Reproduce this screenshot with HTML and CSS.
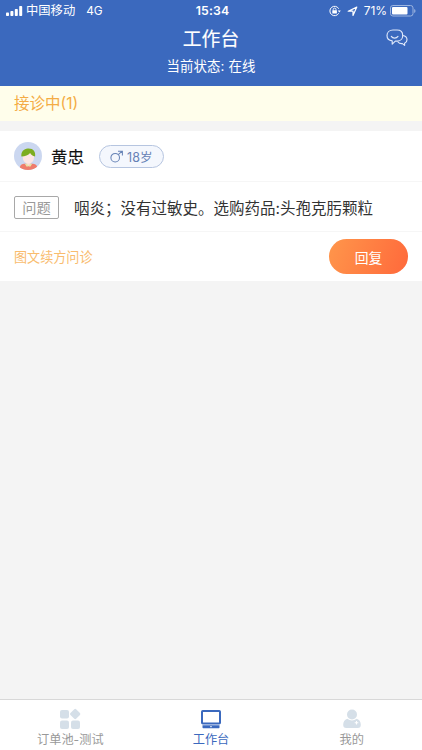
FILE: index.html
```html
<!DOCTYPE html>
<html lang="zh-CN">
<head>
<meta charset="utf-8">
<meta name="viewport" content="width=device-width">
<title>工作台</title>
<link rel="stylesheet" href="styles.css">
</head>
<body>
<div class="app">
  <header class="header">
    <div class="status">
      <div class="status-left">
        <svg class="signal" width="17" height="11" viewBox="0 0 17 11" fill="#fff"><rect x="0" y="6.500" width="3" height="3.500" rx=".8"/><rect x="4.400" y="5" width="3" height="5" rx=".8"/><rect x="8.800" y="3" width="3" height="7" rx=".8"/><rect x="13.200" y="0" width="3" height="10" rx=".8"/></svg>
        <span class="carrier">中国移动</span><span class="network">4G</span>
      </div>
      <span class="clock">15:34</span>
      <div class="status-right">
        <svg width="12" height="12" viewBox="0 0 12 12" fill="none" stroke="#fff"><path d="M9.700 8.300A4.700 4.700 0 1 1 9.700 3.700"/><path d="M8.800 5.500h3l-1.500 2z" fill="#fff" stroke="none"/><path d="M4.200 5.600V4.500a1.400 1.400 0 0 1 2.800 0v1.100" stroke-width=".9"/><rect x="3.300" y="5.200" width="4.600" height="3.300" rx=".5" fill="#fff" stroke="none"/></svg>
        <svg class="location" width="11" height="11" viewBox="0 0 11 11" fill="none" stroke="#fff" stroke-width="1.200" stroke-linejoin="round"><path d="M9.800 1.100 6 9.500V5.200H1.200z"/></svg>
        <span class="percent">71%</span>
        <svg width="26" height="12" viewBox="0 0 26 12"><rect x=".5" y=".5" width="22.500" height="10.500" rx="2.400" fill="none" stroke="#9db5e0"/><rect x="2" y="2" width="15.500" height="7.500" rx="1" fill="#fff"/><path d="M24.200 4v4q1.300-.5 1.300-2t-1.300-2" fill="#9db5e0"/></svg>
      </div>
    </div>
    <div class="titlebar">
      <h1>工作台</h1>
      <svg class="chat" width="22" height="18" viewBox="0 0 22 18" fill="none" stroke="#dfe8fa" stroke-width="1.150" stroke-linecap="round" stroke-linejoin="round"><path d="M7 1h4c3.500 0 5.700 2.200 5.700 5.400s-2.200 5.600-5.200 5.700H9.300L6.200 15.200v-3.300C2.900 11.600 1 9.500 1 6.600 1 3.300 3.500 1 7 1z"/><path d="M5.300 7.400c1.500 2.200 5 2.200 6.700 0"/><path d="M16.800 6.500c2.700.3 4.200 1.900 4.200 4.300 0 1.700-.9 2.900-2.400 3.500v2.100l-2.200-1.800c-2.200.2-3.500-.4-4.400-1.600"/></svg>
    </div>
    <p class="state">当前状态: 在线</p>
  </header>
  <div class="notice">接诊中(1)</div>
  <main class="content">
    <article class="card">
      <div class="patient">
        <svg class="avatar" width="28" height="28" viewBox="0 0 28 28"><defs><clipPath id="face"><circle cx="14" cy="14" r="14"/></clipPath></defs><g clip-path="url(#face)"><path d="M0 0h28v28H0z" fill="#cbd7f0"/><path d="M5.500 28c.1-4.300 1.500-6 4.500-6.200h9c3 .2 4.500 2 4.700 6.200z" fill="#ef7c6b"/><path d="M12.500 19h4v3.500l-2 2-2-2z" fill="#fbd9d2"/><path d="m11 22.200 1.200-.7 2.300 2-1.500 1.500zm7 0-1.200-.7-2.300 2L16 25z" fill="#e7e3a6"/><ellipse cx="14.400" cy="15" rx="5.700" ry="6.600" fill="#fde6e3"/><path d="M7.400 14.600C6.800 9.500 9.800 6.700 13.800 6.400c5.500-.3 8 3.300 7.300 8-2.500-.3-4-1.500-5-3.300-1.700 2.400-4.900 3.300-8.700 3.500z" fill="#7cad20"/></g></svg>
        <span class="name">黄忠</span>
        <span class="age"><svg width="14" height="13" viewBox="0 0 14 13" fill="none" stroke="#6783b6" stroke-width="1.050"><circle cx="5.200" cy="7.700" r="4.300"/><path d="m8.300 4.700 3.800-3.500M8 1.200h4.400v4.300"/></svg>18岁</span>
      </div>
      <div class="problem"><span class="tag">问题</span><span class="description">咽炎；没有过敏史。选购药品:头孢克肟颗粒</span></div>
      <div class="actions"><span class="service">图文续方问诊</span><button class="reply">回复</button></div>
    </article>
  </main>
  <nav class="tabs">
    <div class="tab"><svg width="22" height="22" viewBox="0 0 22 22" fill="#d5dfe8"><rect x="1" y="2" width="9" height="8.500" rx="2"/><rect x="1" y="12.500" width="9" height="8.500" rx="2"/><rect x="12" y="12.500" width="9" height="8.500" rx="2"/><rect x="12.200" y="2" width="8" height="8" rx="1.300" transform="rotate(45 16.200 6)"/></svg><span>订单池-测试</span></div>
    <div class="tab active"><svg width="22" height="22" viewBox="0 0 22 22"><rect x="2" y="3" width="18" height="12.500" rx=".8" fill="none" stroke="#3b69be" stroke-width="2"/><path d="M2.500 17.200h17v2.300q0 .7-.7.700H3.200q-.7 0-.7-.7z" fill="#3b69be"/><path d="M10.200 18.700h1.600" stroke="#fff" stroke-width="1"/></svg><span>工作台</span></div>
    <div class="tab"><svg width="22" height="22" viewBox="0 0 22 22"><circle cx="11" cy="6.500" r="5" fill="#d5dfe8"/><path d="M6.200 10.800Q11 14 15.800 10.800c2.700 1 4 3.200 4 5.900 0 2.300-1 3.300-3 3.300H5.200c-2 0-3-1-3-3.300 0-2.700 1.300-4.900 4-5.900z" fill="#d5dfe8"/><path d="M15.500 12.900v3.600M13.700 14.700h3.600" stroke="#fff" stroke-width="1.100"/></svg><span>我的</span></div>
  </nav>
</div>
</body>
</html>
```
FILE: styles.css
```css
* { box-sizing: border-box; }

body {
  margin: 0;
  font-family: Inter, "Noto Sans CJK SC", sans-serif;
}

svg { display: block; flex: none; }

.app {
  display: flex;
  flex-direction: column;
  height: 750px;
  background: #f4f4f4;
  white-space: nowrap;
}

.header {
  height: 86px;
  color: #fff;
  background: #3b69be;
}

.status {
  display: grid;
  grid-template-columns: 1fr auto 1fr;
  align-items: center;
  height: 22px;
  padding: 0 7px 0 6px;
  font-size: 12px;
  line-height: 22px;
}

.status-left, .status-right { display: flex; align-items: center; }
.status-right { justify-content: flex-end; margin-right: -1px; }
.carrier { margin-left: 3px; font-size: 12.3px; }
.network { margin-left: 11px; font-size: 11.8px; }
.clock { margin-left: 4px; font-weight: 600; font-size: 12.3px; letter-spacing: .1px; }
.location { margin-left: 6px; }
.percent { margin: 0 3px 0 6px; letter-spacing: -.1px; }

.titlebar {
  display: grid;
  grid-template-columns: 1fr auto 1fr;
  align-items: center;
  height: 32px;
  padding-right: 14px;
}

h1 {
  grid-column: 2;
  margin: 2px 0 0 14px;
  font-size: 18.8px;
  font-weight: 400;
  line-height: 32px;
  -webkit-text-stroke: .15px #fff;
}

.chat { justify-self: end; margin-bottom: 2px; }

.state {
  margin: 0;
  font-size: 13.4px;
  line-height: 25px;
  letter-spacing: .15px;
  text-align: center;
}

.notice {
  height: 35px;
  padding-left: 14px;
  color: #f4ac45;
  background: #fffeeb;
  font-size: 15.5px;
  line-height: 35px;
}

.content { flex: 1; padding-top: 10px; }
.card { height: 150px; background: #fff; }

.patient, .problem, .actions {
  display: flex;
  align-items: center;
  height: 50px;
  padding: 0 14px;
}

.patient, .problem { border-bottom: 1px solid #f6f6f6; }
.patient { height: 51px; }
.name { margin-left: 9px; font-size: 16.4px; color: #111; -webkit-text-stroke: .15px #111; }

.age {
  display: flex;
  align-items: center;
  justify-content: center;
  gap: 3px;
  width: 65px;
  height: 23px;
  margin-left: 15px;
  border: 1px solid #b6c5e0;
  border-radius: 12px;
  color: #6681b5;
  background: #f4f7fd;
  font-size: 12.5px;
}

.problem { padding-top: 1px; }

.tag {
  width: 45px;
  height: 23px;
  border: 1px solid #a8a8a8;
  border-radius: 2px;
  color: #999;
  font-size: 14.2px;
  line-height: 21px;
  text-align: center;
}

.description { margin: -1px 0 0 15px; color: #333; font-size: 15.5px; }
.actions { justify-content: space-between; height: 49px; }
.service { color: #f9bc6e; font-size: 13.1px; }

.reply {
  width: 79px;
  height: 35px;
  padding: 0;
  border: 0;
  border-radius: 18px;
  color: #fff;
  background: linear-gradient(110deg, #ff964b, #ff693b);
  font: 13.8px Inter, "Noto Sans CJK SC", sans-serif;
}

.tabs {
  display: grid;
  grid-template-columns: repeat(3, 1fr);
  height: 51px;
  border-top: 1px solid #d8d8d8;
  background: #fff;
}

.tab {
  display: flex;
  flex-direction: column;
  align-items: center;
  padding-top: 8px;
  color: #999;
  font-size: 12.2px;
  line-height: 19px;
}

.active { color: #3b69be; }
```
